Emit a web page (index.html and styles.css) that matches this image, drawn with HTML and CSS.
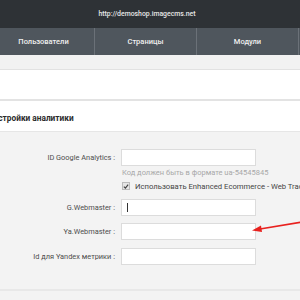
FILE: index.html
```html
<!DOCTYPE html>
<html lang="ru">
<head>
    <meta charset="UTF-8">
    <title>ImageCMS - Настройки аналитики</title>
<link rel="stylesheet" href="styles.css">
</head>
<body>
    <div class="topBar">http://demoshop.imagecms.net</div>
    <div class="mainMenu">
        <div class="menuItem">Пользователи</div>
        <div class="menuItem">Страницы</div>
        <div class="menuItem">Модули</div>
    </div>
    <div class="subBar"></div>
    <div class="toolBar"></div>

    <div class="panel">
        <div class="panelTitle">Настройки аналитики</div>
        <div class="panelBody">
            <div class="formRow">
                <label class="formLabel">ID Google Analytics :</label>
                <div class="formField">
                    <input class="textInput" type="text">
                    <div class="hint">Код должен быть в формате ua-54545845</div>
                    <div class="checkRow">
                        <span class="checkBox">
                            <svg width="7" height="7" viewBox="0 0 7 7"><path d="M1 3.6 L2.8 5.4 L6 1.4" fill="none" stroke="#444" stroke-width="1.4"/></svg>
                        </span>
                        <span class="checkText">Использовать Enhanced Ecommerce - Web Tracking</span>
                    </div>
                </div>
            </div>
            <div class="formRow">
                <label class="formLabel">G.Webmaster :</label>
                <div class="formField">
                    <div class="textInput focused"><span class="caret"></span></div>
                </div>
            </div>
            <div class="formRow">
                <label class="formLabel">Ya.Webmaster :</label>
                <div class="formField">
                    <input class="textInput" type="text">
                </div>
            </div>
            <div class="formRow">
                <label class="formLabel">Id для Yandex метрики :</label>
                <div class="formField">
                    <input class="textInput" type="text">
                </div>
            </div>
        </div>
    </div>

    <!-- red pointer arrow drawn over the screenshot -->
    <svg class="pointer" width="50" height="16" viewBox="0 0 50 16">
        <path d="M50 2 L8 9" stroke="#e8211e" stroke-width="1.6" fill="none"/>
        <path d="M0 10.5 L9 5.5 L10 12 Z" fill="#e8211e"/>
    </svg>
</body>
</html>
```

FILE: styles.css
```css
/* page */
body {
  font-family: Roboto, "Liberation Sans", Arial, sans-serif;
  margin: 0;
  padding: 0;
  width: 300px;
  height: 300px;
  overflow: hidden;
  background-color: #f3f3f3;
  position: relative;
}

.topBar {
  height: 28px;
  line-height: 28px;
  background-color: #2e3236;
  color: #e6e6e6;
  font-size: 6.9px;
  font-weight: 500;
  text-align: center;
  padding-right: 6px;
}

.mainMenu {
  display: flex;
  height: 27px;
  background-color: #4f565d;
  margin-left: -7px;
}

.menuItem {
  flex: 0 0 101px;
  line-height: 27px;
  text-align: center;
  color: #f0f0f0;
  font-size: 7.5px;
  font-weight: 500;
  border-right: 1px solid #6b7178;
}

.subBar {
  height: 14px;
  background-color: #f2f2f2;
  border-bottom: 1px solid #e2e2e2;
}

.toolBar {
  height: 29px;
  background-color: #fff;
  border-bottom: 2px solid #e3e3e3;
}

.panel {
  margin-left: -12px;
}

.panelTitle {
  height: 30px;
  line-height: 34px;
  font-size: 8.3px;
  font-weight: bold;
  color: #2b2b2b;
  background-color: #fff;
  border-bottom: 1px solid #e6e6e6;
}

.panelBody {
  padding-top: 17px;
  padding-bottom: 17px;
  border-bottom: 2px solid #e8e8e8;
}

.formRow {
  display: flex;
  margin-bottom: 7.5px;
}

.formLabel {
  flex: 0 0 133px;
  text-align: right;
  font-size: 7.4px;
  color: #4d4d4d;
  line-height: 17px;
  padding-right: 6px;
  box-sizing: border-box;
}

.formField {
  display: flex;
  flex-direction: column;
}

.textInput {
  width: 135px;
  height: 17px;
  box-sizing: border-box;
  border: 1px solid #dcdcdc;
  background-color: #fff;
  margin: 0;
  padding: 0;
  display: block;
}

.focused {
  display: flex;
  align-items: center;
  padding-left: 5px;
}

.caret {
  width: 1px;
  height: 9px;
  background-color: #333;
}

.hint {
  font-size: 7.5px;
  color: #a8a8a8;
  margin-top: 2px;
  padding-left: 1px;
  line-height: 10px;
}

.checkRow {
  display: flex;
  align-items: center;
  margin-top: 3px;
  height: 10px;
  white-space: nowrap;
}

.checkBox {
  width: 6px;
  height: 6px;
  border: 1px solid #bbb;
  background-color: #e6e6e6;
  margin-left: 1px;
  margin-right: 5px;
  display: flex;
  align-items: center;
  justify-content: center;
}

.checkText {
  font-size: 7.7px;
  color: #444;
}

.pointer {
  position: absolute;
  left: 252px;
  top: 220px;
}
```
